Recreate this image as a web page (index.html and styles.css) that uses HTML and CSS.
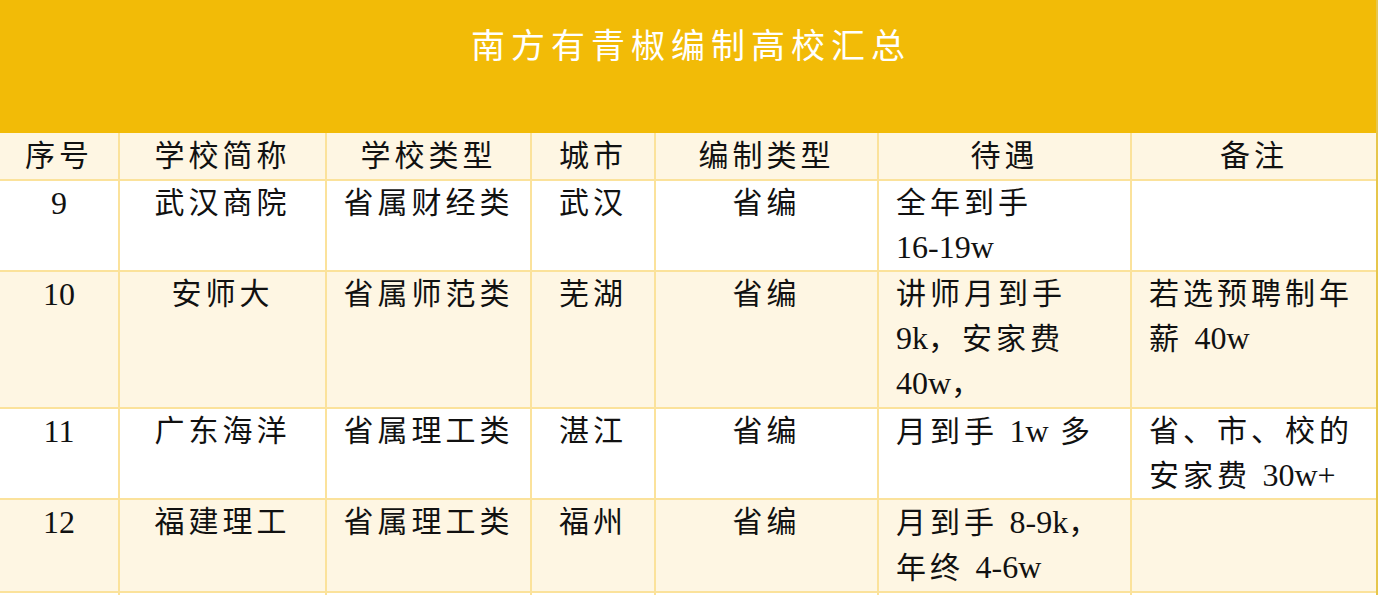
FILE: index.html
```html
<!DOCTYPE html>
<html lang="zh-CN">
<head>
<meta charset="utf-8">
<title>南方有青椒编制高校汇总</title>
<link rel="stylesheet" href="styles.css">
</head>
<body>
<div class="sheet">
  <div class="banner"><h1 class="title">南方有青椒编制高校汇总</h1></div>
  <table class="grid">
    <colgroup>
      <col class="c1"><col class="c2"><col class="c3"><col class="c4"><col class="c5"><col class="c6"><col class="c7">
    </colgroup>
    <thead>
      <tr class="head">
        <th>序号</th><th>学校简称</th><th>学校类型</th><th>城市</th><th>编制类型</th><th>待遇</th><th>备注</th>
      </tr>
    </thead>
    <tbody>
      <tr class="row white h90">
        <td class="ctr"><span class="num">9</span></td><td class="ctr">武汉商院</td><td class="ctr">省属财经类</td><td class="ctr">武汉</td><td class="ctr">省编</td>
        <td class="lft">全年到手<br><span class="num">16-19w</span></td><td class="lft"></td>
      </tr>
      <tr class="row cream h137">
        <td class="ctr"><span class="num">10</span></td><td class="ctr">安师大</td><td class="ctr">省属师范类</td><td class="ctr">芜湖</td><td class="ctr">省编</td>
        <td class="lft">讲师月到手<br><span class="num">9k</span>，安家费<br><span class="num">40w</span>，</td><td class="lft">若选预聘制年<br>薪 <span class="num">40w</span></td>
      </tr>
      <tr class="row white h90">
        <td class="ctr"><span class="num">11</span></td><td class="ctr">广东海洋</td><td class="ctr">省属理工类</td><td class="ctr">湛江</td><td class="ctr">省编</td>
        <td class="lft">月到手 <span class="num">1w</span> 多</td><td class="lft">省、市、校的<br>安家费 <span class="num">30w+</span></td>
      </tr>
      <tr class="row cream h93">
        <td class="ctr"><span class="num">12</span></td><td class="ctr">福建理工</td><td class="ctr">省属理工类</td><td class="ctr">福州</td><td class="ctr">省编</td>
        <td class="lft">月到手 <span class="num">8-9k</span>，<br>年终 <span class="num">4-6w</span></td><td class="lft"></td>
      </tr>
      <tr class="row white h5">
        <td></td><td></td><td></td><td></td><td></td><td></td><td></td>
      </tr>
    </tbody>
  </table>
</div>
</body>
</html>
```

FILE: styles.css
```css
html, body {
  margin: 0;
  padding: 0;
  background: #ffffff;
  overflow: hidden;
}

.sheet {
  width: 1378px;
  border-right: 2px solid #e6c64c;
  box-sizing: border-box;
  font-family: "Liberation Serif", "Noto Sans CJK SC", serif;
  color: #111111;
}

.banner {
  height: 133px;
  background: #f2bb07;
  box-sizing: border-box;
  padding-top: 23px;
}

.title {
  margin: 0;
  text-align: center;
  color: #ffffff;
  font-family: "Noto Sans CJK SC", sans-serif;
  font-weight: 400;
  font-size: 34px;
  line-height: 42px;
  letter-spacing: 6px;
  padding-left: 6px;
}

.grid {
  width: 1376px;
  border-collapse: collapse;
  table-layout: fixed;
  font-size: 30px;
  letter-spacing: 4px;
  line-height: 44px;
}

.c1 { width: 119px; }
.c2 { width: 207px; }
.c3 { width: 205px; }
.c4 { width: 124px; }
.c5 { width: 223px; }
.c6 { width: 253px; }
.c7 { width: 245px; }

.grid th,
.grid td {
  border: 2px solid #fbe29b;
  padding: 0;
  vertical-align: top;
  font-weight: 400;
  white-space: nowrap;
  overflow: hidden;
}

.grid tr > :first-child { border-left: none; }
.grid tr > :last-child { border-right: none; }
.grid thead th { border-top: none; }

.head {
  height: 47px;
  background: #fef6e3;
}

.head th {
  text-align: center;
  line-height: 44px;
  padding-top: 1px;
}

.white { background: #ffffff; }
.cream { background: #fef6e3; }

.h90 { height: 90px; }
.h137 { height: 137px; }
.h93 { height: 93px; }
.h5 { height: 5px; }

.num {
  font-size: 32px;
  letter-spacing: 0;
}

.grid td.ctr { text-align: center; }
.grid td.lft { text-align: left; padding-left: 17px; }
```
